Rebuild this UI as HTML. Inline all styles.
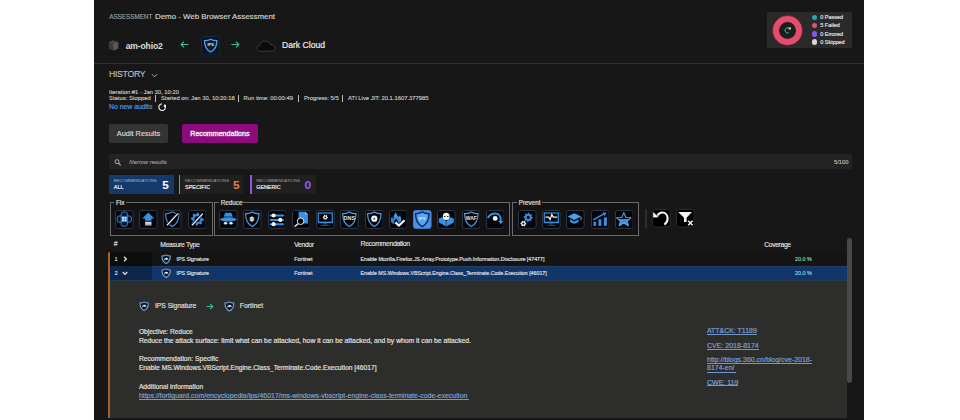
<!DOCTYPE html>
<html><head><meta charset="utf-8"><style>
html,body{margin:0;padding:0;width:960px;height:420px;overflow:hidden;background:#ffffff;font-family:"Liberation Sans",sans-serif;}
.r{position:absolute;display:block;}
.t{position:absolute;white-space:nowrap;line-height:1;}
</style></head><body>
<div class="r" style="left:94px;top:0px;width:770px;height:420px;background:#171717;"></div>
<div class="t" style="left:109.20px;top:13.95px;font-size:6.300px;color:#9c9c9c;-webkit-text-stroke:0.15px #9c9c9c;">ASSESSMENT</div>
<div class="t" style="left:155.00px;top:13.39px;font-size:7.900px;color:#d4d4d4;-webkit-text-stroke:0.15px #d4d4d4;">Demo - Web Browser Assessment</div>
<div class="r" style="left:767px;top:12px;width:85px;height:35.5px;background:#2a2a2a;"></div>
<svg class="r" style="left:772px;top:14.6px" width="31" height="31" viewBox="0 0 31 31"><circle cx="15.5" cy="15.5" r="8.6" fill="#1d1d1d"/><circle cx="15.5" cy="15.5" r="11.75" fill="none" stroke="#e84c6c" stroke-width="6.5"/><circle cx="15.5" cy="15.5" r="15" fill="none" stroke="#3a1c24" stroke-width="0.5"/><path d="M16.6 13.2 A2.4 2.6 0 1 0 16.8 17.6" fill="none" stroke="#3fb0a6" stroke-width="1"/><path d="M16 12.6 L19.2 12.4 L18 15.2Z" fill="#e6e6e6"/></svg>
<div class="r" style="left:812.1px;top:14.6px;width:5.4px;height:5.4px;background:#2aa9a4;border-radius:50%;"></div>
<div class="t" style="left:820.20px;top:15.12px;font-size:5.500px;color:#e6e6e6;-webkit-text-stroke:0.15px #e6e6e6;">0 Passed</div>
<div class="r" style="left:812.1px;top:22.87px;width:5.4px;height:5.4px;background:#e9506e;border-radius:50%;"></div>
<div class="t" style="left:820.20px;top:23.39px;font-size:5.500px;color:#e6e6e6;-webkit-text-stroke:0.15px #e6e6e6;">5 Failed</div>
<div class="r" style="left:812.1px;top:31.14px;width:5.4px;height:5.4px;background:#8e55e6;border-radius:50%;"></div>
<div class="t" style="left:820.20px;top:31.67px;font-size:5.500px;color:#e6e6e6;-webkit-text-stroke:0.15px #e6e6e6;">0 Errored</div>
<div class="r" style="left:812.1px;top:39.41px;width:5.4px;height:5.4px;background:#d8d8d8;border-radius:50%;"></div>
<div class="t" style="left:820.20px;top:39.94px;font-size:5.500px;color:#e6e6e6;-webkit-text-stroke:0.15px #e6e6e6;">0 Skipped</div>
<svg class="r" style="left:108.2px;top:40px" width="11" height="11" viewBox="0 0 11 11"><path d="M0.8 2.2 L4.8 0.6 L10.2 2 L10.2 8.6 L5.6 10.6 L0.8 8.8Z" fill="#3c3c3c"/><path d="M5.4 3.6 L10.2 2 L10.2 8.6 L5.6 10.6Z" fill="#595959"/><path d="M0.8 2.2 L4.8 0.6 L10.2 2 L5.4 3.6Z" fill="#464646"/></svg>
<div class="t" style="left:125.70px;top:41.99px;font-size:8.600px;color:#dedede;font-weight:700;letter-spacing:-0.150px;">am-ohio2</div>
<svg class="r" style="left:180.4px;top:41.2px" width="9" height="7" viewBox="0 0 9 7"><path d="M8.6 3.5 H1.2 M4 0.6 L1.1 3.5 L4 6.4" fill="none" stroke="#3dbca2" stroke-width="1.1"/></svg>
<svg class="r" style="left:231.4px;top:41.2px" width="9" height="7" viewBox="0 0 9 7"><path d="M0.4 3.5 H7.8 M5 0.6 L7.9 3.5 L5 6.4" fill="none" stroke="#3dbca2" stroke-width="1.1"/></svg>
<svg class="r" style="left:200.8px;top:35.8px" width="19.4" height="19.4" viewBox="0 0 19.4 19.4"><rect x="0.5" y="0.5" width="18.4" height="18.4" rx="2.2" fill="#081529" stroke="#1c2c44" stroke-width="1"/><path d="M9.7 3.2 C7.6 4.4 5.5 4.7 3.5 4.7 C3.5 10.4 5.7 14 9.7 16 C13.7 14 15.9 10.4 15.9 4.7 C13.9 4.7 11.8 4.4 9.7 3.2Z" fill="#0c1c34" stroke="#5a9fdc" stroke-width="1.3"/><text x="9.6" y="9.8" font-family="Liberation Sans" font-size="3.9" font-weight="700" fill="#f0f0f0" text-anchor="middle">IPS</text></svg>
<svg class="r" style="left:256.3px;top:39.5px" width="20" height="12" viewBox="0 0 20 12"><path d="M4.2 11.2 C2 11.2 0.8 9.9 0.8 8.4 C0.8 6.8 2.1 5.8 3.6 5.8 C4 3.2 6 1 9.2 1 C11.8 1 13.6 2.6 14.2 4.6 C16.8 4.5 19.2 6.1 19.2 8.2 C19.2 10 17.8 11.2 15.8 11.2Z" fill="#0b0b0b" stroke="#3c3c3c" stroke-width="1"/></svg>
<div class="t" style="left:282.00px;top:41.39px;font-size:8.600px;color:#e8e8e8;-webkit-text-stroke:0.22px #e8e8e8;">Dark Cloud</div>
<div class="r" style="left:94px;top:63px;width:770px;height:1px;background:#2f2f2f;"></div>
<div class="t" style="left:109.00px;top:70.01px;font-size:8.700px;color:#bdbdbd;letter-spacing:-0.300px;-webkit-text-stroke:0.15px #bdbdbd;">HISTORY</div>
<svg class="r" style="left:150.5px;top:73px" width="7" height="5" viewBox="0 0 7 5"><path d="M1 1.2 L3.5 3.8 L6 1.2" fill="none" stroke="#b0b0b0" stroke-width="1"/></svg>
<div class="t" style="left:109.10px;top:90.03px;font-size:5.850px;color:#c8c8c8;-webkit-text-stroke:0.15px #c8c8c8;">Iteration #1 - Jan 30, 10:20</div>
<div class="t" style="left:109.10px;top:95.83px;font-size:5.850px;color:#c8c8c8;-webkit-text-stroke:0.15px #c8c8c8;">Status: Stopped</div>
<div class="r" style="left:155.0px;top:95.2px;width:0.85px;height:6.4px;background:#bdbdbd;"></div>
<div class="t" style="left:160.90px;top:95.83px;font-size:5.850px;color:#c8c8c8;-webkit-text-stroke:0.15px #c8c8c8;">Started on: Jan 30, 10:20:18</div>
<div class="r" style="left:238.1px;top:95.2px;width:0.85px;height:6.4px;background:#bdbdbd;"></div>
<div class="t" style="left:243.60px;top:95.83px;font-size:5.850px;color:#c8c8c8;-webkit-text-stroke:0.15px #c8c8c8;">Run time: 00:00:49</div>
<div class="r" style="left:298.0px;top:95.2px;width:0.85px;height:6.4px;background:#bdbdbd;"></div>
<div class="t" style="left:303.90px;top:95.83px;font-size:5.850px;color:#c8c8c8;-webkit-text-stroke:0.15px #c8c8c8;">Progress: 5/5</div>
<div class="r" style="left:342.3px;top:95.2px;width:0.85px;height:6.4px;background:#bdbdbd;"></div>
<div class="t" style="left:348.10px;top:95.83px;font-size:5.850px;color:#c8c8c8;-webkit-text-stroke:0.15px #c8c8c8;">ATI Live JIT: 20.1.1607.377985</div>
<div class="t" style="left:109.10px;top:104.19px;font-size:6.840px;color:#5c9be0;-webkit-text-stroke:0.15px #5c9be0;">No new audits</div>
<svg class="r" style="left:157.6px;top:102.8px" width="8.5" height="8.5" viewBox="0 0 8.5 8.5"><path d="M4 0.9 A3.3 3.3 0 1 0 7.0 2.6" fill="none" stroke="#e6e6e6" stroke-width="1.25"/><circle cx="6.9" cy="2.7" r="1.2" fill="#f4f4f4"/></svg>
<div class="r" style="left:109px;top:123.5px;width:59px;height:19px;background:#343434;border-radius:2px;"></div>
<div class="t" style="left:116.80px;top:129.74px;font-size:7.360px;color:#d8d8d8;-webkit-text-stroke:0.15px #d8d8d8;">Audit Results</div>
<div class="r" style="left:182.3px;top:123.5px;width:75.8px;height:19px;background:#8e0b7e;border-radius:2px;"></div>
<div class="t" style="left:190.30px;top:130.56px;font-size:7.100px;color:#f2f2f2;-webkit-text-stroke:0.35px #f2f2f2;">Recommendations</div>
<div class="r" style="left:109px;top:154.3px;width:742.7px;height:15px;background:#232323;"></div>
<svg class="r" style="left:114.3px;top:158.6px" width="8" height="7" viewBox="0 0 8 7"><circle cx="3" cy="2.7" r="2" fill="none" stroke="#bdbdbd" stroke-width="0.9"/><path d="M4.5 4.2 L6.6 6.3" stroke="#bdbdbd" stroke-width="1.2"/></svg>
<div class="t" style="left:129.20px;top:160.02px;font-size:5.860px;color:#9a9a9a;-webkit-text-stroke:0.15px #9a9a9a;font-style:italic;">Narrow results</div>
<div class="t" style="left:834.00px;top:160.01px;font-size:5.750px;color:#bdbdbd;-webkit-text-stroke:0.15px #bdbdbd;">5/100</div>
<div class="r" style="left:109px;top:175px;width:65px;height:18.5px;background:#14396b;"></div>
<div class="t" style="left:113.80px;top:178.66px;font-size:4.170px;color:#a7b8d2;">RECOMMENDATIONS</div>
<div class="t" style="left:113.80px;top:184.82px;font-size:5.500px;color:#e8eef6;-webkit-text-stroke:0.2px #e8eef6;">ALL</div>
<div class="t" style="left:162.30px;top:179.57px;font-size:11.800px;color:#ffffff;font-weight:700;">5</div>
<div class="r" style="left:178.7px;top:175px;width:64.6px;height:18.5px;background:#202020;"></div>
<div class="r" style="left:178.7px;top:175px;width:1.5px;height:18.5px;background:#d9782d;"></div>
<div class="t" style="left:185.00px;top:178.57px;font-size:4.270px;color:#a0a0a0;">RECOMMENDATIONS</div>
<div class="t" style="left:185.00px;top:184.87px;font-size:5.450px;color:#e6e6e6;-webkit-text-stroke:0.2px #e6e6e6;">SPECIFIC</div>
<div class="t" style="left:233.10px;top:179.57px;font-size:11.800px;color:#e8803a;font-weight:700;">5</div>
<div class="r" style="left:250px;top:175px;width:65.8px;height:18.5px;background:#202020;"></div>
<div class="r" style="left:250px;top:175px;width:1.5px;height:18.5px;background:#8e55e6;"></div>
<div class="t" style="left:256.20px;top:178.57px;font-size:4.270px;color:#a0a0a0;">RECOMMENDATIONS</div>
<div class="t" style="left:256.20px;top:184.91px;font-size:5.400px;color:#e6e6e6;-webkit-text-stroke:0.2px #e6e6e6;">GENERIC</div>
<div class="t" style="left:304.40px;top:179.57px;font-size:11.800px;color:#9b5cf0;font-weight:700;">0</div>
<div class="r" style="left:110.1px;top:202.2px;width:102.9px;height:33.7px;background:#131313;border:1.8px solid #6a6a6a;box-sizing:border-box;"></div>
<div class="r" style="left:114.2px;top:199.5px;width:11.9px;height:4.5px;background:#171717;"></div>
<div class="r" style="left:114.2px;top:204.0px;width:11.9px;height:1.0px;background:#131313;"></div>
<div class="t" style="left:116.00px;top:200.34px;font-size:6.300px;color:#e2e2e2;-webkit-text-stroke:0.15px #e2e2e2;">Fix</div>
<div class="r" style="left:214.2px;top:202.2px;width:296.0px;height:33.7px;background:#131313;border:1.8px solid #6a6a6a;box-sizing:border-box;"></div>
<div class="r" style="left:218.89999999999998px;top:199.5px;width:24.6px;height:4.5px;background:#171717;"></div>
<div class="r" style="left:218.89999999999998px;top:204.0px;width:24.6px;height:1.0px;background:#131313;"></div>
<div class="t" style="left:220.70px;top:200.34px;font-size:6.300px;color:#e2e2e2;-webkit-text-stroke:0.15px #e2e2e2;">Reduce</div>
<div class="r" style="left:512.1px;top:202.2px;width:126.69999999999993px;height:33.7px;background:#131313;border:1.8px solid #6a6a6a;box-sizing:border-box;"></div>
<div class="r" style="left:517.0px;top:199.5px;width:24.900000000000002px;height:4.5px;background:#171717;"></div>
<div class="r" style="left:517.0px;top:204.0px;width:24.900000000000002px;height:1.0px;background:#131313;"></div>
<div class="t" style="left:518.80px;top:200.34px;font-size:6.300px;color:#e2e2e2;-webkit-text-stroke:0.15px #e2e2e2;">Prevent</div>
<div class="r" style="left:645.3px;top:208.5px;width:1.7px;height:19.5px;background:#2e2e2e;"></div>
<svg class="r" style="left:115.1px;top:210.0px" width="18.6" height="18.9" viewBox="0 0 18.6 18.9"><rect x="0.5" y="0.5" width="17.6" height="17.9" rx="2.2" fill="#02050b" stroke="#2d3744" stroke-width="1"/><rect x="2.2" y="6" width="14.2" height="6.2" rx="1.8" fill="#07172b" stroke="#4a8ccc" stroke-width="0.9"/><rect x="6.2" y="2" width="6.2" height="14.2" rx="1.8" fill="#07172b" stroke="#4a8ccc" stroke-width="0.9"/><rect x="6.3" y="6.1" width="6" height="6" fill="#1f6fc4"/><rect x="7.1" y="6.9" width="1.9" height="1.9" fill="#d8eeff"/><rect x="9.6" y="6.9" width="1.9" height="1.9" fill="#d8eeff"/><rect x="7.1" y="9.4" width="1.9" height="1.9" fill="#d8eeff"/><rect x="9.6" y="9.4" width="1.9" height="1.9" fill="#d8eeff"/></svg>
<svg class="r" style="left:139.2px;top:210.0px" width="18.6" height="18.9" viewBox="0 0 18.6 18.9"><rect x="0.5" y="0.5" width="17.6" height="17.9" rx="2.2" fill="#02050b" stroke="#2d3744" stroke-width="1"/><defs><linearGradient id="gb" x1="0" y1="0" x2="0" y2="1"><stop offset="0" stop-color="#f0f0f0"/><stop offset="1" stop-color="#9a9a9a"/></linearGradient></defs><path d="M9.3 2.6 L15.4 8.6 L12.5 8.6 L12.5 10.8 L6.1 10.8 L6.1 8.6 L3.2 8.6Z" fill="#3a8fe0"/><rect x="6.1" y="11.8" width="6.4" height="3.8" fill="url(#gb)"/></svg>
<svg class="r" style="left:163.4px;top:210.0px" width="18.6" height="18.9" viewBox="0 0 18.6 18.9"><rect x="0.5" y="0.5" width="17.6" height="17.9" rx="2.2" fill="#02050b" stroke="#2d3744" stroke-width="1"/><path d="M9.3 1.9 C7.2 3.2 4.9 3.7 2.6 3.7 C2.6 9.9 5 14.3 9.3 16.6 C13.6 14.3 16 9.9 16 3.7 C13.7 3.7 11.4 3.2 9.3 1.9Z" fill="none" stroke="#5a9ad4" stroke-width="1.1"/><path d="M4 15.2 L14.8 3.6" stroke="#02050b" stroke-width="3"/><path d="M4 15.2 L14.8 3.6" stroke="#f4f4f4" stroke-width="1.3"/></svg>
<svg class="r" style="left:187.6px;top:210.0px" width="18.6" height="18.9" viewBox="0 0 18.6 18.9"><rect x="0.5" y="0.5" width="17.6" height="17.9" rx="2.2" fill="#02050b" stroke="#2d3744" stroke-width="1"/><polygon points="15.90,9.10 15.77,10.39 13.81,10.97 13.36,11.81 13.97,13.77 12.97,14.59 11.17,13.61 10.25,13.89 9.30,15.70 8.01,15.57 7.43,13.61 6.59,13.16 4.63,13.77 3.81,12.77 4.79,10.97 4.51,10.05 2.70,9.10 2.83,7.81 4.79,7.23 5.24,6.39 4.63,4.43 5.63,3.61 7.43,4.59 8.35,4.31 9.30,2.50 10.59,2.63 11.17,4.59 12.01,5.04 13.97,4.43 14.79,5.43 13.81,7.23 14.09,8.15" fill="#3a8fe0"/><circle cx="9.3" cy="9.1" r="2.97" fill="#02050b"/><path d="M4 15.2 L14.8 3.6" stroke="#02050b" stroke-width="3"/><path d="M4 15.2 L14.8 3.6" stroke="#f4f4f4" stroke-width="1.3"/></svg>
<svg class="r" style="left:219.0px;top:210.0px" width="18.6" height="18.9" viewBox="0 0 18.6 18.9"><rect x="0.5" y="0.5" width="17.6" height="17.9" rx="2.2" fill="#02050b" stroke="#2d3744" stroke-width="1"/><path d="M4.9 8.4 C5 4.8 5.8 2.6 7.6 2.6 C8.4 2.6 8.8 3 9.3 3 C9.8 3 10.2 2.6 11 2.6 C12.8 2.6 13.6 4.8 13.7 8.4Z" fill="#3a8fe0"/><rect x="4.9" y="6.6" width="8.8" height="1.5" fill="#0a2444"/><ellipse cx="9.3" cy="9.4" rx="8.2" ry="2.1" fill="#3a8fe0"/><ellipse cx="6.6" cy="13.3" rx="1.7" ry="1.3" fill="#f4f4f4"/><ellipse cx="12" cy="13.3" rx="1.7" ry="1.3" fill="#f4f4f4"/></svg>
<svg class="r" style="left:243.25px;top:210.0px" width="18.6" height="18.9" viewBox="0 0 18.6 18.9"><rect x="0.5" y="0.5" width="17.6" height="17.9" rx="2.2" fill="#02050b" stroke="#2d3744" stroke-width="1"/><path d="M9.3 1.9 C7.2 3.2 4.9 3.7 2.6 3.7 C2.6 9.9 5 14.3 9.3 16.6 C13.6 14.3 16 9.9 16 3.7 C13.7 3.7 11.4 3.2 9.3 1.9Z" fill="none" stroke="#5a9ad4" stroke-width="1.2"/><ellipse cx="8.9" cy="9.1" rx="2.1" ry="2.7" fill="#f3dfd8"/><path d="M6 7.6 L11.8 10.6 M11.8 7.6 L6 10.6 M5.8 9.1 H12" stroke="#8f98a4" stroke-width="0.35"/></svg>
<svg class="r" style="left:267.5px;top:210.0px" width="18.6" height="18.9" viewBox="0 0 18.6 18.9"><rect x="0.5" y="0.5" width="17.6" height="17.9" rx="2.2" fill="#02050b" stroke="#2d3744" stroke-width="1"/><rect x="1.6" y="4.5" width="14.6" height="2" rx="1" fill="#3a8fe0"/><rect x="1.6" y="8.9" width="14.6" height="2" rx="1" fill="#3a8fe0"/><rect x="1.6" y="13.2" width="14.6" height="2" rx="1" fill="#3a8fe0"/><circle cx="5.6" cy="5.5" r="2.1" fill="#f4f4f4"/><circle cx="12.3" cy="9.9" r="2.1" fill="#f4f4f4"/><circle cx="5.6" cy="14.2" r="2.1" fill="#f4f4f4"/></svg>
<svg class="r" style="left:291.75px;top:210.0px" width="18.6" height="18.9" viewBox="0 0 18.6 18.9"><rect x="0.5" y="0.5" width="17.6" height="17.9" rx="2.2" fill="#02050b" stroke="#2d3744" stroke-width="1"/><path d="M6.6 1.8 L13.2 1.8 L16 4.6 L16 13.6 L6.6 13.6Z" fill="#3a8fe0"/><path d="M13.2 1.8 L13.2 4.6 L16 4.6" fill="#9ccaf5"/><circle cx="8.6" cy="11.2" r="3.3" fill="#02050b" stroke="#e8e8e8" stroke-width="1"/><path d="M6.2 13.7 L2.6 16.6" stroke="#e8e8e8" stroke-width="1.4"/></svg>
<svg class="r" style="left:316.0px;top:210.0px" width="18.6" height="18.9" viewBox="0 0 18.6 18.9"><rect x="0.5" y="0.5" width="17.6" height="17.9" rx="2.2" fill="#02050b" stroke="#2d3744" stroke-width="1"/><rect x="2.3" y="3" width="14" height="9.6" fill="#02050b" stroke="#3a8fe0" stroke-width="1.2"/><rect x="2.3" y="11.6" width="14" height="1.4" fill="#3a8fe0"/><rect x="7.3" y="13" width="4" height="1.6" fill="#1d4f86"/><rect x="5" y="15" width="8.6" height="0.9" fill="#1d4f86"/><polygon points="11.90,7.30 11.81,7.97 10.97,8.26 10.66,8.66 10.60,9.55 9.97,9.81 9.30,9.22 8.80,9.16 8.00,9.55 7.46,9.14 7.63,8.26 7.44,7.80 6.70,7.30 6.79,6.63 7.63,6.34 7.94,5.94 8.00,5.05 8.63,4.79 9.30,5.38 9.80,5.44 10.60,5.05 11.14,5.46 10.97,6.34 11.16,6.80" fill="#f4f4f4"/><circle cx="9.3" cy="7.3" r="0.91" fill="#02050b"/></svg>
<svg class="r" style="left:340.25px;top:210.0px" width="18.6" height="18.9" viewBox="0 0 18.6 18.9"><rect x="0.5" y="0.5" width="17.6" height="17.9" rx="2.2" fill="#02050b" stroke="#2d3744" stroke-width="1"/><path d="M9.3 1.9 C7.2 3.2 4.9 3.7 2.6 3.7 C2.6 9.9 5 14.3 9.3 16.6 C13.6 14.3 16 9.9 16 3.7 C13.7 3.7 11.4 3.2 9.3 1.9Z" fill="none" stroke="#5a9ad4" stroke-width="1.2"/><rect x="4" y="6.2" width="10.6" height="3.6" fill="#02050b"/><text x="3.6" y="9.7" font-family="Liberation Sans" font-size="4.8" font-weight="700" fill="#e8e8e8" textLength="11.4" lengthAdjust="spacingAndGlyphs">DNS</text></svg>
<svg class="r" style="left:364.5px;top:210.0px" width="18.6" height="18.9" viewBox="0 0 18.6 18.9"><rect x="0.5" y="0.5" width="17.6" height="17.9" rx="2.2" fill="#02050b" stroke="#2d3744" stroke-width="1"/><path d="M9.3 1.9 C7.2 3.2 4.9 3.7 2.6 3.7 C2.6 9.9 5 14.3 9.3 16.6 C13.6 14.3 16 9.9 16 3.7 C13.7 3.7 11.4 3.2 9.3 1.9Z" fill="none" stroke="#5a9ad4" stroke-width="1.2"/><circle cx="9.3" cy="8.7" r="3.1" fill="#f4f4f4"/><circle cx="9.3" cy="8.7" r="0.9" fill="#3a3a3a"/></svg>
<svg class="r" style="left:388.75px;top:210.0px" width="18.6" height="18.9" viewBox="0 0 18.6 18.9"><rect x="0.5" y="0.5" width="17.6" height="17.9" rx="2.2" fill="#02050b" stroke="#2d3744" stroke-width="1"/><defs><linearGradient id="gf" x1="0.7" y1="0" x2="0.2" y2="1"><stop offset="0" stop-color="#4aa8f4"/><stop offset="1" stop-color="#2a72c4"/></linearGradient></defs><path d="M1.9 11.5 C1.5 9 2.5 7.4 3.3 6.6 C3.3 8 3.9 8.8 4.5 9.2 C4.3 6.2 5.5 4 6.9 2.3 C7.3 4.6 8.7 5.8 9.7 7.2 C10 6.6 10.3 6 10.7 5.4 C12.1 7 12.7 9 12.3 11.2 C11.7 13.2 9.7 14.2 7.1 14.2 C4.3 14.2 2.3 13.2 1.9 11.5Z" fill="url(#gf)"/><path d="M5.2 12.8 C4.9 11.2 5.8 9.8 7.2 8.6 C8.3 9.8 9.1 10.8 8.9 12.8Z" fill="#02050b"/><path d="M6.4 12.4 L9.9 15.5 L15.6 10.2" fill="none" stroke="#02050b" stroke-width="3.6"/><path d="M6.4 12.4 L9.9 15.5 L15.6 10.2" fill="none" stroke="#f4f4f4" stroke-width="2.1"/></svg>
<svg class="r" style="left:413.0px;top:210.0px" width="18.6" height="18.9" viewBox="0 0 18.6 18.9"><rect x="0.5" y="0.5" width="17.6" height="17.9" rx="2.2" fill="#4a92e6" stroke="#3b7dcc" stroke-width="1"/><path d="M9.3 1.9 C7.2 3.2 4.9 3.7 2.6 3.7 C2.6 9.9 5 14.3 9.3 16.6 C13.6 14.3 16 9.9 16 3.7 C13.7 3.7 11.4 3.2 9.3 1.9Z" fill="#5aa6ee" stroke="#0b2a5e" stroke-width="1.5"/><text x="9.3" y="10.4" font-family="Liberation Sans" font-size="4.3" font-weight="700" fill="#cfe6fc" text-anchor="middle">IPS</text></svg>
<svg class="r" style="left:437.25px;top:210.0px" width="18.6" height="18.9" viewBox="0 0 18.6 18.9"><rect x="0.5" y="0.5" width="17.6" height="17.9" rx="2.2" fill="#02050b" stroke="#2d3744" stroke-width="1"/><path d="M1.8 8.4 L5.2 7.2 L9.3 11.2 L13.4 7.2 L16.8 8.4 L16.8 12.6 L9.3 16.6 L1.8 12.6Z" fill="#3a8fe0"/><path d="M9.3 11.2 V16.6" stroke="#0a2a55" stroke-width="0.6"/><ellipse cx="9.2" cy="6.4" rx="3.4" ry="3.6" fill="#f4f4f4"/><ellipse cx="7.7" cy="6.4" rx="0.9" ry="0.55" fill="#1a1a1a" transform="rotate(20 7.7 6.4)"/><ellipse cx="10.8" cy="6.4" rx="0.9" ry="0.55" fill="#1a1a1a" transform="rotate(-20 10.8 6.4)"/></svg>
<svg class="r" style="left:461.5px;top:210.0px" width="18.6" height="18.9" viewBox="0 0 18.6 18.9"><rect x="0.5" y="0.5" width="17.6" height="17.9" rx="2.2" fill="#02050b" stroke="#2d3744" stroke-width="1"/><path d="M9.3 1.9 C7.2 3.2 4.9 3.7 2.6 3.7 C2.6 9.9 5 14.3 9.3 16.6 C13.6 14.3 16 9.9 16 3.7 C13.7 3.7 11.4 3.2 9.3 1.9Z" fill="none" stroke="#5a9ad4" stroke-width="1.2"/><rect x="4" y="6.2" width="10.6" height="3.6" fill="#02050b"/><text x="3.8" y="9.7" font-family="Liberation Sans" font-size="4.8" font-weight="700" fill="#e8e8e8" textLength="11" lengthAdjust="spacingAndGlyphs">WAF</text></svg>
<svg class="r" style="left:485.75px;top:210.0px" width="18.6" height="18.9" viewBox="0 0 18.6 18.9"><rect x="0.5" y="0.5" width="17.6" height="17.9" rx="2.2" fill="#02050b" stroke="#2d3744" stroke-width="1"/><path d="M1.8 8 C3.4 5 6 3.6 9.2 3.6 C13 3.6 14.8 6.8 14.8 10 L14.8 11.4" fill="none" stroke="#3a8fe0" stroke-width="2"/><path d="M12.2 11 L14.8 14.2 L17.4 11Z" fill="#3a8fe0"/><circle cx="9.2" cy="8.4" r="2.4" fill="#f4f4f4"/></svg>
<svg class="r" style="left:518.1px;top:210.0px" width="18.6" height="18.9" viewBox="0 0 18.6 18.9"><rect x="0.5" y="0.5" width="17.6" height="17.9" rx="2.2" fill="#02050b" stroke="#2d3744" stroke-width="1"/><polygon points="14.90,7.40 14.81,8.32 13.41,8.73 13.09,9.33 13.52,10.72 12.81,11.31 11.53,10.61 10.88,10.81 10.20,12.10 9.28,12.01 8.87,10.61 8.27,10.29 6.88,10.72 6.29,10.01 6.99,8.73 6.79,8.08 5.50,7.40 5.59,6.48 6.99,6.07 7.31,5.47 6.88,4.08 7.59,3.49 8.87,4.19 9.52,3.99 10.20,2.70 11.12,2.79 11.53,4.19 12.13,4.51 13.52,4.08 14.11,4.79 13.41,6.07 13.61,6.72" fill="#3a8fe0"/><circle cx="10.2" cy="7.4" r="1.55" fill="#02050b"/><polygon points="8.40,13.60 8.30,14.38 7.32,14.71 6.97,15.17 6.90,16.20 6.18,16.50 5.40,15.82 4.83,15.74 3.90,16.20 3.28,15.72 3.48,14.71 3.26,14.17 2.40,13.60 2.50,12.82 3.48,12.49 3.83,12.03 3.90,11.00 4.62,10.70 5.40,11.38 5.97,11.46 6.90,11.00 7.52,11.48 7.32,12.49 7.54,13.03" fill="#f4f4f4"/><circle cx="5.4" cy="13.6" r="0.03" fill="#02050b"/><circle cx="5.4" cy="13.6" r="1.05" fill="#02050b"/></svg>
<svg class="r" style="left:542.25px;top:210.0px" width="18.6" height="18.9" viewBox="0 0 18.6 18.9"><rect x="0.5" y="0.5" width="17.6" height="17.9" rx="2.2" fill="#02050b" stroke="#2d3744" stroke-width="1"/><rect x="2.3" y="3" width="14" height="9.6" fill="#02050b" stroke="#3a8fe0" stroke-width="1.2"/><rect x="2.3" y="11.6" width="14" height="1.4" fill="#3a8fe0"/><rect x="7.3" y="13" width="4" height="1.6" fill="#1d4f86"/><rect x="5" y="15" width="8.6" height="0.9" fill="#1d4f86"/><path d="M3.4 7.2 L6.6 7.2 L8.1 9.6 L9.8 4.6 L11.3 7.2 L15.2 7.2" fill="none" stroke="#f4f4f4" stroke-width="1.3"/></svg>
<svg class="r" style="left:566.4px;top:210.0px" width="18.6" height="18.9" viewBox="0 0 18.6 18.9"><rect x="0.5" y="0.5" width="17.6" height="17.9" rx="2.2" fill="#02050b" stroke="#2d3744" stroke-width="1"/><path d="M8.3 3.2 L15.2 6.6 L8.3 10 L1.6 6.6Z" fill="#4aa0ec"/><path d="M4 9.3 L4 11.6 C6.6 14.4 10.2 14.4 12.6 11.6 L12.6 9.3 L8.3 11.6Z" fill="#3a8fe0"/><path d="M15 6.8 L15 10.2" stroke="#e0e0e0" stroke-width="0.7"/></svg>
<svg class="r" style="left:590.55px;top:210.0px" width="18.6" height="18.9" viewBox="0 0 18.6 18.9"><rect x="0.5" y="0.5" width="17.6" height="17.9" rx="2.2" fill="#02050b" stroke="#2d3744" stroke-width="1"/><rect x="2.5" y="11.7" width="2.6" height="4.2" fill="#3a8fe0"/><rect x="7.5" y="9.2" width="2.8" height="6.7" fill="#3a8fe0"/><rect x="12.9" y="7.4" width="3" height="8.5" fill="#3a8fe0"/><path d="M2.1 9.8 L13.4 3.6" stroke="#3a8fe0" stroke-width="1.5"/><path d="M11.2 2.4 L15.4 2.4 L13.9 6.2Z" fill="#3a8fe0"/></svg>
<svg class="r" style="left:614.7px;top:210.0px" width="18.6" height="18.9" viewBox="0 0 18.6 18.9"><rect x="0.5" y="0.5" width="17.6" height="17.9" rx="2.2" fill="#02050b" stroke="#2d3744" stroke-width="1"/><defs><linearGradient id="gs" x1="0" y1="0" x2="0" y2="1"><stop offset="0.47" stop-color="#02050b"/><stop offset="0.47" stop-color="#3a8fe0"/></linearGradient></defs><path d="M8.8 2.6 L10.9 7.5 L16 7.8 L12.1 11.1 L13.5 15.8 L8.8 13.1 L4.1 15.8 L5.5 11.1 L1.6 7.8 L6.7 7.5Z" fill="url(#gs)" stroke="#5aa6ea" stroke-width="1.1" stroke-linejoin="round"/></svg>
<svg class="r" style="left:652.2px;top:209.2px" width="18.6" height="18.5" viewBox="0 0 18.6 18.5"><rect x="0.5" y="0.5" width="17.6" height="17.5" rx="2.2" fill="#000000" stroke="#262c33" stroke-width="1"/><path d="M5.4 6.6 C6.6 4.4 8.4 3.4 10.2 3.4 C13.4 3.4 15.6 6.2 15.6 9.6 C15.6 12.2 14.2 14.4 12.4 15.6" fill="none" stroke="#f4f4f4" stroke-width="2"/><path d="M1.2 2.9 L1.2 8.6 L6.8 8.2Z" fill="#f4f4f4"/></svg>
<svg class="r" style="left:676.3px;top:209.2px" width="18.6" height="18.5" viewBox="0 0 18.6 18.5"><rect x="0.5" y="0.5" width="17.6" height="17.5" rx="2.2" fill="#000000" stroke="#262c33" stroke-width="1"/><path d="M2.2 3 L16 3 L10.6 8.8 L10.6 12.9 L8 12.9 L8 8.8Z" fill="#f4f4f4"/><path d="M12.2 11.8 L16.6 16.2 M16.6 11.8 L12.2 16.2" stroke="#f4f4f4" stroke-width="1.5"/></svg>
<div class="t" style="left:113.80px;top:240.82px;font-size:6.800px;color:#dedede;-webkit-text-stroke:0.15px #dedede;">#</div>
<div class="t" style="left:160.30px;top:241.50px;font-size:6.820px;color:#dedede;letter-spacing:-0.326px;-webkit-text-stroke:0.2px #dedede;">Measure Type</div>
<div class="t" style="left:294.30px;top:241.55px;font-size:6.765px;color:#dedede;letter-spacing:-0.325px;-webkit-text-stroke:0.2px #dedede;">Vendor</div>
<div class="t" style="left:360.50px;top:241.42px;font-size:6.919px;color:#dedede;letter-spacing:-0.352px;-webkit-text-stroke:0.2px #dedede;">Recommendation</div>
<div class="t" style="left:764.30px;top:241.60px;font-size:6.710px;color:#dedede;letter-spacing:-0.331px;-webkit-text-stroke:0.2px #dedede;">Coverage</div>
<div class="r" style="left:110px;top:251.6px;width:737.4px;height:14px;background:#141414;"></div>
<div class="r" style="left:110px;top:251.6px;width:42.2px;height:14px;background:#0c0c0c;"></div>
<div class="r" style="left:110px;top:265.6px;width:737.4px;height:14.6px;background:#12366a;"></div>
<div class="r" style="left:110px;top:265.6px;width:42.2px;height:14.6px;background:#0d2649;"></div>
<div class="r" style="left:152.2px;top:265.7px;width:695.2px;height:1px;background:#243f62;"></div>
<div class="r" style="left:110px;top:279.7px;width:737.4px;height:1px;background:#283a4e;"></div>
<div class="r" style="left:108.1px;top:251.6px;width:1.8px;height:166.6px;background:#a65e2c;border-radius:1px 1px 0 0;"></div>
<div class="t" style="left:114.60px;top:257.07px;font-size:5.800px;color:#e0e0e0;-webkit-text-stroke:0.1px #e0e0e0;">1</div>
<svg class="r" style="left:160.7px;top:253.70000000000002px" width="10.3" height="10.3" viewBox="0 0 10 10"><path d="M5 0.8 C3.6 1.6 2.2 1.9 0.9 1.9 C0.9 5.7 2.4 8.1 5 9.3 C7.6 8.1 9.1 5.7 9.1 1.9 C7.8 1.9 6.4 1.6 5 0.8Z" fill="#0c1a2c" stroke="#78a8d8" stroke-width="1"/><path d="M2.9 6.4 C3.2 4.5 4.1 3.7 5.2 3.7 C6.3 3.7 7 4.5 7.2 5.9 L5.9 5.1 L5 5.8 L4.1 5.1 Z" fill="#eef3f8"/></svg>
<div class="t" style="left:176.50px;top:256.84px;font-size:5.250px;color:#e2e2e2;-webkit-text-stroke:0.15px #e2e2e2;">IPS Signature</div>
<div class="t" style="left:294.30px;top:256.71px;font-size:5.400px;color:#e2e2e2;-webkit-text-stroke:0.15px #e2e2e2;">Fortinet</div>
<div class="t" style="left:795.00px;top:256.71px;font-size:5.400px;color:#86dcae;-webkit-text-stroke:0.15px #86dcae;">20.0 %</div>
<div class="t" style="left:114.60px;top:271.47px;font-size:5.800px;color:#e0e0e0;-webkit-text-stroke:0.1px #e0e0e0;">2</div>
<svg class="r" style="left:160.7px;top:268.09999999999997px" width="10.3" height="10.3" viewBox="0 0 10 10"><path d="M5 0.8 C3.6 1.6 2.2 1.9 0.9 1.9 C0.9 5.7 2.4 8.1 5 9.3 C7.6 8.1 9.1 5.7 9.1 1.9 C7.8 1.9 6.4 1.6 5 0.8Z" fill="#0c1a2c" stroke="#78a8d8" stroke-width="1"/><path d="M2.9 6.4 C3.2 4.5 4.1 3.7 5.2 3.7 C6.3 3.7 7 4.5 7.2 5.9 L5.9 5.1 L5 5.8 L4.1 5.1 Z" fill="#eef3f8"/></svg>
<div class="t" style="left:176.50px;top:271.24px;font-size:5.250px;color:#e2e2e2;-webkit-text-stroke:0.15px #e2e2e2;">IPS Signature</div>
<div class="t" style="left:294.30px;top:271.11px;font-size:5.400px;color:#e2e2e2;-webkit-text-stroke:0.15px #e2e2e2;">Fortinet</div>
<div class="t" style="left:795.00px;top:271.11px;font-size:5.400px;color:#86d6e0;-webkit-text-stroke:0.15px #86d6e0;">20.0 %</div>
<svg class="r" style="left:123px;top:256.3px" width="5" height="6" viewBox="0 0 5 6"><path d="M1 0.7 L3.4 3 L1 5.3" fill="none" stroke="#e6e6e6" stroke-width="1.2"/></svg>
<svg class="r" style="left:122px;top:271.4px" width="6" height="5" viewBox="0 0 6 5"><path d="M0.7 1 L3 3.4 L5.3 1" fill="none" stroke="#e6e6e6" stroke-width="1.2"/></svg>
<div class="t" style="left:360.50px;top:256.80px;font-size:5.290px;color:#e2e2e2;-webkit-text-stroke:0.15px #e2e2e2;">Enable Mozilla.Firefox.JS.Array.Prototype.Push.Information.Disclosure [47477]</div>
<div class="t" style="left:360.50px;top:271.23px;font-size:5.260px;color:#e2e2e2;-webkit-text-stroke:0.15px #e2e2e2;">Enable MS.Windows.VBScript.Engine.Class_Terminate.Code.Execution [46017]</div>
<div class="r" style="left:110px;top:280.7px;width:737.2px;height:137.5px;background:#2d2d2b;"></div>
<svg class="r" style="left:139.2px;top:301.3px" width="10.3" height="10.3" viewBox="0 0 10 10"><path d="M5 0.8 C3.6 1.6 2.2 1.9 0.9 1.9 C0.9 5.7 2.4 8.1 5 9.3 C7.6 8.1 9.1 5.7 9.1 1.9 C7.8 1.9 6.4 1.6 5 0.8Z" fill="#0c1a2c" stroke="#78a8d8" stroke-width="1"/><path d="M2.9 6.4 C3.2 4.5 4.1 3.7 5.2 3.7 C6.3 3.7 7 4.5 7.2 5.9 L5.9 5.1 L5 5.8 L4.1 5.1 Z" fill="#eef3f8"/></svg>
<div class="t" style="left:155.00px;top:303.01px;font-size:6.690px;color:#e2e2e2;-webkit-text-stroke:0.15px #e2e2e2;">IPS Signature</div>
<svg class="r" style="left:206px;top:302.5px" width="8" height="7" viewBox="0 0 8 7"><path d="M0.6 3.5 H6.8 M4 0.8 L6.8 3.5 L4 6.2" fill="none" stroke="#35c2a5" stroke-width="1.1"/></svg>
<svg class="r" style="left:223.9px;top:301.3px" width="10.8" height="10.8" viewBox="0 0 10 10"><path d="M5 0.8 C3.6 1.6 2.2 1.9 0.9 1.9 C0.9 5.7 2.4 8.1 5 9.3 C7.6 8.1 9.1 5.7 9.1 1.9 C7.8 1.9 6.4 1.6 5 0.8Z" fill="#0c1a2c" stroke="#78a8d8" stroke-width="1"/><path d="M2.9 6.4 C3.2 4.5 4.1 3.7 5.2 3.7 C6.3 3.7 7 4.5 7.2 5.9 L5.9 5.1 L5 5.8 L4.1 5.1 Z" fill="#eef3f8"/></svg>
<div class="t" style="left:239.70px;top:302.83px;font-size:6.900px;color:#e2e2e2;-webkit-text-stroke:0.15px #e2e2e2;">Fortinet</div>
<div class="t" style="left:138.90px;top:328.59px;font-size:6.600px;color:#e0e0e0;-webkit-text-stroke:0.18px #e0e0e0;">Objective: Reduce</div>
<div class="t" style="left:138.90px;top:337.54px;font-size:6.780px;color:#e0e0e0;-webkit-text-stroke:0.18px #e0e0e0;">Reduce the attack surface: limit what can be attacked, how it can be attacked, and by whom it can be attacked.</div>
<div class="t" style="left:138.90px;top:356.11px;font-size:6.700px;color:#e0e0e0;-webkit-text-stroke:0.18px #e0e0e0;">Recommendation: Specific</div>
<div class="t" style="left:138.90px;top:365.10px;font-size:6.710px;color:#e0e0e0;-webkit-text-stroke:0.18px #e0e0e0;">Enable MS.Windows.VBScript.Engine.Class_Terminate.Code.Execution [46017]</div>
<div class="t" style="left:138.90px;top:383.70px;font-size:6.700px;color:#e0e0e0;-webkit-text-stroke:0.18px #e0e0e0;">Additional information</div>
<div class="t" style="left:138.90px;top:392.68px;font-size:6.960px;color:#7aa2d8;-webkit-text-stroke:0.18px #7aa2d8;">https://fortiguard.com/encyclopedia/ips/46017/ms-windows-vbscript-engine-class-terminate-code-execution</div>
<div class="r" style="left:139.1px;top:398.85px;width:329.5px;height:0.75px;background:#6f98cf;"></div>
<div class="t" style="left:707.00px;top:328.29px;font-size:6.950px;color:#7aa2d8;-webkit-text-stroke:0.18px #7aa2d8;">ATT&amp;CK: T1189</div>
<div class="r" style="left:707.2px;top:334.45px;width:49.7px;height:0.75px;background:#6f98cf;"></div>
<div class="t" style="left:707.00px;top:342.35px;font-size:7.000px;color:#7aa2d8;-webkit-text-stroke:0.18px #7aa2d8;">CVE: 2018-8174</div>
<div class="r" style="left:707.2px;top:348.55px;width:51.7px;height:0.75px;background:#6f98cf;"></div>
<div class="t" style="left:707.00px;top:356.98px;font-size:6.970px;color:#7aa2d8;-webkit-text-stroke:0.18px #7aa2d8;">http://blogs.360.cn/blog/cve-2018-</div>
<div class="r" style="left:707.2px;top:363.15px;width:105px;height:0.75px;background:#6f98cf;"></div>
<div class="t" style="left:707.00px;top:365.38px;font-size:6.970px;color:#7aa2d8;-webkit-text-stroke:0.18px #7aa2d8;">8174-en/</div>
<div class="r" style="left:707.2px;top:371.55px;width:28.6px;height:0.75px;background:#6f98cf;"></div>
<div class="t" style="left:707.00px;top:379.15px;font-size:7.000px;color:#7aa2d8;-webkit-text-stroke:0.18px #7aa2d8;">CWE: 119</div>
<div class="r" style="left:707.2px;top:385.35px;width:31.2px;height:0.75px;background:#6f98cf;"></div>
<div class="r" style="left:847.2px;top:238px;width:4.8px;height:145px;background:#494949;border-radius:2.4px;"></div>
</body></html>
